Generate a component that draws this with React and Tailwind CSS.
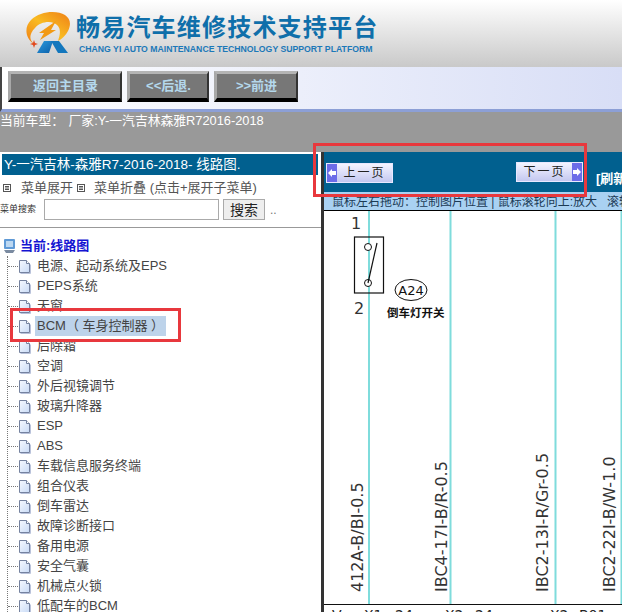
const cjk = "font-['Liberation_Sans','Noto_Sans_CJK_SC',sans-serif]";

const menu = [
  "电源、起动系统及EPS",
  "PEPS系统",
  "天窗",
  "BCM（ 车身控制器 ）",
  "后除霜",
  "空调",
  "外后视镜调节",
  "玻璃升降器",
  "ESP",
  "ABS",
  "车载信息服务终端",
  "组合仪表",
  "倒车雷达",
  "故障诊断接口",
  "备用电源",
  "安全气囊",
  "机械点火锁",
  "低配车的BCM",
];

function Logo() {
  return (
    <svg width="46" height="42" viewBox="25 12 46 42" className="shrink-0">
      <defs>
        <linearGradient id="swirl" x1="0" y1="1" x2="1" y2="0">
          <stop offset="0" stopColor="#ef7d14" />
          <stop offset="0.5" stopColor="#f9bb22" />
          <stop offset="1" stopColor="#ee7f16" />
        </linearGradient>
        <linearGradient id="leg" x1="0" y1="0" x2="1" y2="1">
          <stop offset="0" stopColor="#2c9be0" />
          <stop offset="1" stopColor="#0c5fa8" />
        </linearGradient>
      </defs>
      <path d="M34 44C25 38 24 27 31 20c9-9 26-10 34-5 6 4 6 10 3 16-2 4-6 8-10 10 2-6 3-11 0-15-5-6-17-5-23 2-6 6-6 12-1 16z" fill="url(#swirl)" />
      <path d="M39 33l17-12-5 9 5 0-16 10 4-7z" fill="#f29a14" />
      <path d="M30 44l3-1 1-3 1 3 3 1-3 1-1 3-1-3z" fill="#e2481c" />
      <path d="M44 41h9l-4 12H37z" fill="url(#leg)" />
      <path d="M51 41h8l9 12H58z" fill="#1377bd" />
    </svg>
  );
}

function NavButton({ w, children }) {
  return (
    <button className={`${w} h-[31px] bg-[#777777] border-t-[3px] border-l-[3px] border-t-[#b4b4b4] border-l-[#a8a8a8] border-r-2 border-b-[4px] border-r-[#333] border-b-black text-[13px] font-bold text-[#b4d8ec]`}>
      {children}
    </button>
  );
}

function PageButton({ dir, children }) {
  const arrow = (
    <span className="w-[10px] h-full bg-[#6c6ce8] flex items-center justify-center">
      <svg width="8" height="8" viewBox="0 0 8 8">
        <path d={dir === "prev" ? "M0 4l4-4v2h4v4H4v2z" : "M8 4L4 0v2H0v4h4v2z"} fill="#fff" />
      </svg>
    </span>
  );
  return (
    <button className="w-[67px] h-[20px] flex items-center bg-gradient-to-b from-[#f4f4ff] to-[#c4c8f0] border border-[#e8e8ff] text-[12px] text-[#222] tracking-[2px]">
      {dir === "prev" && arrow}
      <span className="flex-1 text-center">{children}</span>
      {dir === "next" && arrow}
    </button>
  );
}

function BoxIcon() {
  return (
    <svg width="8" height="8" viewBox="0 0 8 8" className="shrink-0">
      <rect x="0.5" y="0.5" width="7" height="7" fill="#fff" stroke="#555" />
      <path d="M2 2.5h4M2 4h4M2 5.5h4" stroke="#555" />
    </svg>
  );
}

function DocIcon() {
  return (
    <svg width="13" height="15" viewBox="0 0 13 15" className="shrink-0">
      <defs>
        <linearGradient id="doc" x1="0" y1="0" x2="1" y2="1">
          <stop offset="0" stopColor="#f6f9ff" />
          <stop offset="1" stopColor="#c9dbf6" />
        </linearGradient>
      </defs>
      <path d="M2.5 14.5h10v-9" fill="none" stroke="#b9c2da" />
      <path d="M1.5 1.5h7l3 3v9h-10z" fill="url(#doc)" stroke="#75829f" />
      <path d="M8.5 1.5v3h3" fill="#fff" stroke="#75829f" />
    </svg>
  );
}

// wiring diagram, drawn in page coordinates
function Diagram() {
  const wires = [369, 450.5, 555.5, 621.5];
  const labels = [
    { x: 363, t: "412A-B/BI-0.5" },
    { x: 447, t: "IBC4-17I-B/R-0.5" },
    { x: 548, t: "IBC2-13I-R/Gr-0.5" },
    { x: 615, t: "IBC2-22I-B/W-1.0" },
  ];
  const bottom = [
    { x: 332, t: "V" },
    { x: 364, t: "X1" },
    { x: 395, t: "24" },
    { x: 445, t: "X2" },
    { x: 475, t: "24" },
    { x: 550, t: "X2" },
    { x: 579, t: "B01" },
  ];
  return (
    <svg width="298" height="401" viewBox="324 211 298 401" className="block">
      {wires.map((x) => (
        <line key={x} x1={x} y1="211" x2={x} y2="604" stroke="#7fdcdc" strokeWidth="2" />
      ))}
      <rect x="354.5" y="237" width="29" height="56" fill="none" stroke="#111" strokeWidth="1.2" />
      <circle cx="368" cy="247" r="3.5" fill="#fff" stroke="#111" />
      <circle cx="368" cy="283" r="3.5" fill="#fff" stroke="#111" />
      <line x1="368" y1="283" x2="377" y2="243" stroke="#111" strokeWidth="1.2" />
      <text x="351" y="229" fontSize="16" fontFamily="DejaVu Sans" fill="#333">1</text>
      <text x="354" y="314" fontSize="16" fontFamily="DejaVu Sans" fill="#333">2</text>
      <ellipse cx="411" cy="290" rx="16" ry="10.5" fill="#fff" stroke="#111" />
      <text x="411" y="295" textAnchor="middle" fontSize="13" fontFamily="DejaVu Sans" fill="#111">A24</text>
      <text x="387" y="317" fontSize="11.5" fontWeight="700" fontFamily="Noto Sans CJK SC" fill="#111">倒车灯开关</text>
      {labels.map((l) => (
        <text key={l.t} x={l.x} y="592" transform={`rotate(-90 ${l.x} 592)`} fontSize="16" fontFamily="DejaVu Sans" fill="#333">{l.t}</text>
      ))}
      <line x1="324" y1="604.5" x2="622" y2="604.5" stroke="#111" />
      {bottom.map((b) => (
        <text key={b.x} x={b.x} y="620" fontSize="14" fontFamily="DejaVu Sans" fill="#222">{b.t}</text>
      ))}
    </svg>
  );
}

export default function App() {
  return (
    <div className={`relative w-[622px] h-[612px] overflow-hidden bg-white ${cjk}`}>
      {/* header */}
      <div className="h-[67px] bg-gradient-to-b from-[#ffffff] to-[#c9c9c9] flex items-start pl-[25px] pt-[12px] gap-[5px]">
        <Logo />
        <div>
          <div className="text-[24px] leading-[28px] font-bold text-[#0f6faa] tracking-[1.2px] font-['Noto_Sans_CJK_SC',sans-serif]">畅易汽车维修技术支持平台</div>
          <div className="text-[8.7px] leading-[12px] font-bold text-[#1c78b8] mt-[3px] ml-[3px] whitespace-nowrap">CHANG YI AUTO MAINTENANCE TECHNOLOGY SUPPORT PLATFORM</div>
        </div>
      </div>

      {/* nav buttons */}
      <div className="h-[45px] flex items-start gap-[5px] pl-[6px] pt-[4px] border-l-2 border-l-[#444] border-b-[3px] border-b-[#8c9fd6] bg-gradient-to-r from-white to-[#d8def6]">
        <NavButton w="w-[114px]">返回主目录</NavButton>
        <NavButton w="w-[82px]">&lt;&lt;后退.</NavButton>
        <NavButton w="w-[84px]">&gt;&gt;前进</NavButton>
      </div>

      {/* current car */}
      <div className="h-[40px] bg-[#999999] text-[12.8px] leading-[16px] text-white whitespace-pre pt-[1px]">当前车型： <span className="ml-[1px]">厂家:Y-一汽吉林森雅R72016-2018</span></div>

      <div className="flex">
        {/* left menu */}
        <div className="w-[321px] shrink-0 pt-[2px]">
          <div className="ml-[2px] mr-[3px] h-[21px] bg-[#01608f] text-white text-[13.5px] leading-[21px] pl-[2px] whitespace-nowrap">Y-一汽吉林-森雅R7-2016-2018- 线路图.</div>
          <div className="flex items-center h-[23px] mt-[1px] text-[13px] text-[#555] whitespace-nowrap pl-[3px]">
            <BoxIcon />
            <span className="ml-[10px] mr-[4px]">菜单展开</span>
            <BoxIcon />
            <span className="ml-[9px]">菜单折叠 (点击+展开子菜单)</span>
          </div>
          <div className="flex items-center h-[21px] whitespace-nowrap">
            <span className="w-[44px] text-[9px] text-[#333]">菜单搜索</span>
            <input className="w-[175px] h-[21px] border border-[#aaa] bg-white" />
            <button className="w-[42px] h-[21px] ml-[4px] border border-[#aaa] bg-[#eeeeee] text-[14px] text-[#222]">搜索</button>
            <span className="ml-[5px] text-[12px] text-[#777]">..</span>
          </div>
          <div className="h-px bg-[#999] mt-[7px]"></div>
          <div className="pl-[3px] pt-[8px]">
            <div className="flex items-center h-[20px] gap-[4px] text-[13px] font-bold text-[#1414d2]">
              <svg width="13" height="16" viewBox="0 0 13 16" className="shrink-0">
                <rect x="1" y="1" width="11" height="10" rx="1" fill="#5f9ad6" />
                <rect x="3" y="3" width="7" height="6" fill="#bcd8f2" />
                <path d="M1 12h11l-2 3H3z" fill="#7a8aa0" />
              </svg>
              当前:线路图
            </div>
            <ul className="ml-[4px] border-l border-dotted border-[#777]">
              {menu.map((m) => (
                <li key={m} className="flex items-center h-[20px] text-[13px] text-[#444] whitespace-pre">
                  <span className="w-[10px] border-t border-dotted border-[#777]"></span>
                  <DocIcon />
                  <span className={`ml-[4px] px-[2px] ${m.startsWith("BCM") ? "bg-[#bdd3ea]" : ""}`}>{m}</span>
                </li>
              ))}
            </ul>
          </div>
        </div>

        {/* right diagram */}
        <div className="flex-1 min-w-0 border-l-[3px] border-[#333] h-[460px] overflow-hidden">
          <div className="relative h-[40px] bg-[#01608f]">
            <div className="absolute left-[2px] top-[11px]"><PageButton dir="prev">上一页</PageButton></div>
            <div className="absolute left-[192px] top-[10px]"><PageButton dir="next">下一页</PageButton></div>
            <span className="absolute left-[272px] top-[17px] text-[13px] font-bold text-white whitespace-nowrap">[刷新</span>
          </div>
          <div className="h-[19px] bg-[#a9d1f2] border-b border-black text-[12px] leading-[21px] text-[#1b3a55] pl-[8px] whitespace-pre overflow-hidden">鼠标左右拖动：控制图片位置 | 鼠标滚轮向上:放大   滚轮</div>
          <Diagram />
        </div>
      </div>

      {/* red annotations drawn over the screenshot */}
      <div className="absolute left-[313px] top-[143px] w-[274px] h-[54px] border-[3px] border-[#e8383d]"></div>
      <div className="absolute left-[10px] top-[308px] w-[171px] h-[34px] border-[3px] border-[#e8383d]"></div>
    </div>
  );
}
